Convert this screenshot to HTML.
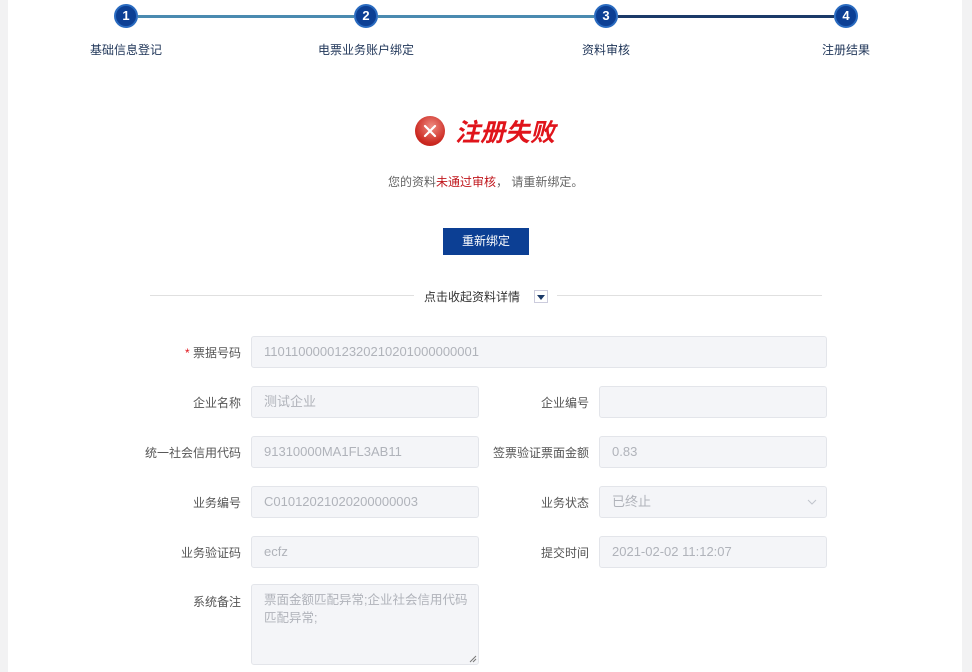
<!DOCTYPE html>
<html><head><meta charset="utf-8"><style>
*{margin:0;padding:0;box-sizing:border-box}
body{width:972px;height:672px;background:#f2f2f3;font-family:"Liberation Sans","Noto Sans CJK SC",sans-serif;position:relative;overflow:hidden}
.main{position:absolute;left:8px;top:0;width:954px;height:672px;background:#fff}
.a{position:absolute}
.c{width:24px;height:24px;border-radius:50%;background:#0c3f94;color:#fff;font-weight:bold;font-size:13px;text-align:center;line-height:20px;border:2px solid #2a6bc0}
.lab{font-size:12px;color:#1f3558;white-space:nowrap;transform:translateX(-50%)}
.fl{font-size:12px;color:#555;text-align:right;width:200px}
.in{background:#f4f5f8;border:1px solid #e3e5ea;border-radius:3px;height:32px;font-size:13px;color:#b0b3ba;padding-left:12px;line-height:30px}
</style></head><body>
<div class="main"></div>
<div class="a" style="left:138px;top:15px;width:216px;height:3px;background:#4a8ab0"></div>
<div class="a" style="left:378px;top:15px;width:216px;height:3px;background:#4a8ab0"></div>
<div class="a" style="left:618px;top:15px;width:216px;height:3px;background:#1b3a68"></div>
<div class="a c" style="left:114px;top:4px">1</div>
<div class="a c" style="left:354px;top:4px">2</div>
<div class="a c" style="left:594px;top:4px">3</div>
<div class="a c" style="left:834px;top:4px">4</div>
<div class="a lab" style="left:126px;top:41px">基础信息登记</div>
<div class="a lab" style="left:366px;top:41px">电票业务账户绑定</div>
<div class="a lab" style="left:606px;top:41px">资料审核</div>
<div class="a lab" style="left:846px;top:41px">注册结果</div>

<div class="a" style="left:415px;top:116px;width:30px;height:30px;border-radius:50%;background:radial-gradient(circle at 55% 35%,#ee8a80,#cc2a22 65%,#b81c16)"></div>
<svg class="a" style="left:415px;top:116px" width="30" height="30"><path d="M10 10 L20 20 M20 10 L10 20" stroke="#fff" stroke-width="2.2" stroke-linecap="round"/></svg>
<div class="a" style="left:455px;top:113px;font-size:25px;font-weight:bold;font-style:italic;color:#e0141b">注册失败</div>
<div class="a" style="left:388px;top:173px;font-size:12px;color:#666">您的资料<span style="color:#c0171d">未通过审核</span>， 请重新绑定。</div>
<div class="a" style="left:443px;top:228px;width:86px;height:27px;background:#0c3f94;color:#fff;font-size:12px;text-align:center;line-height:27px">重新绑定</div>

<div class="a" style="left:150px;top:295px;width:264px;height:1px;background:#e0e0e0"></div>
<div class="a" style="left:557px;top:295px;width:265px;height:1px;background:#e0e0e0"></div>
<div class="a" style="left:424px;top:288px;font-size:12px;color:#333">点击收起资料详情</div>
<div class="a" style="left:534px;top:290px;width:14px;height:13px;border:1px solid #ccd;background:#fff"></div>
<div class="a" style="left:537px;top:295px;width:0;height:0;border-left:4px solid transparent;border-right:4px solid transparent;border-top:5px solid #1b3a68"></div>

<div class="a fl" style="left:41px;top:344px"><span style="color:#e0141b">* </span>票据号码</div>
<div class="a in" style="left:251px;top:336px;width:576px">110110000012320210201000000001</div>

<div class="a fl" style="left:41px;top:394px">企业名称</div>
<div class="a in" style="left:251px;top:386px;width:228px">测试企业</div>
<div class="a fl" style="left:389px;top:394px">企业编号</div>
<div class="a in" style="left:599px;top:386px;width:228px"></div>

<div class="a fl" style="left:41px;top:444px">统一社会信用代码</div>
<div class="a in" style="left:251px;top:436px;width:228px">91310000MA1FL3AB11</div>
<div class="a fl" style="left:389px;top:444px">签票验证票面金额</div>
<div class="a in" style="left:599px;top:436px;width:228px">0.83</div>

<div class="a fl" style="left:41px;top:494px">业务编号</div>
<div class="a in" style="left:251px;top:486px;width:228px">C01012021020200000003</div>
<div class="a fl" style="left:389px;top:494px">业务状态</div>
<div class="a in" style="left:599px;top:486px;width:228px">已终止<svg style="position:absolute;right:9px;top:12px" width="10" height="6"><path d="M1 1 L5 5 L9 1" stroke="#c0c4cc" fill="none" stroke-width="1"/></svg></div>

<div class="a fl" style="left:41px;top:544px">业务验证码</div>
<div class="a in" style="left:251px;top:536px;width:228px">ecfz</div>
<div class="a fl" style="left:389px;top:544px">提交时间</div>
<div class="a in" style="left:599px;top:536px;width:228px">2021-02-02 11:12:07</div>

<div class="a fl" style="left:41px;top:593px">系统备注</div>
<div class="a in" style="left:251px;top:584px;width:228px;height:81px;line-height:18px;padding-top:6px;padding-right:2px;font-size:12.5px;white-space:nowrap">票面金额匹配异常;企业社会信用代码<br>匹配异常;</div>
<svg class="a" style="left:468px;top:654px" width="9" height="9"><path d="M8 2 L2 8 M8 5 L5 8" stroke="#777" stroke-width="1"/></svg>
</body></html>
